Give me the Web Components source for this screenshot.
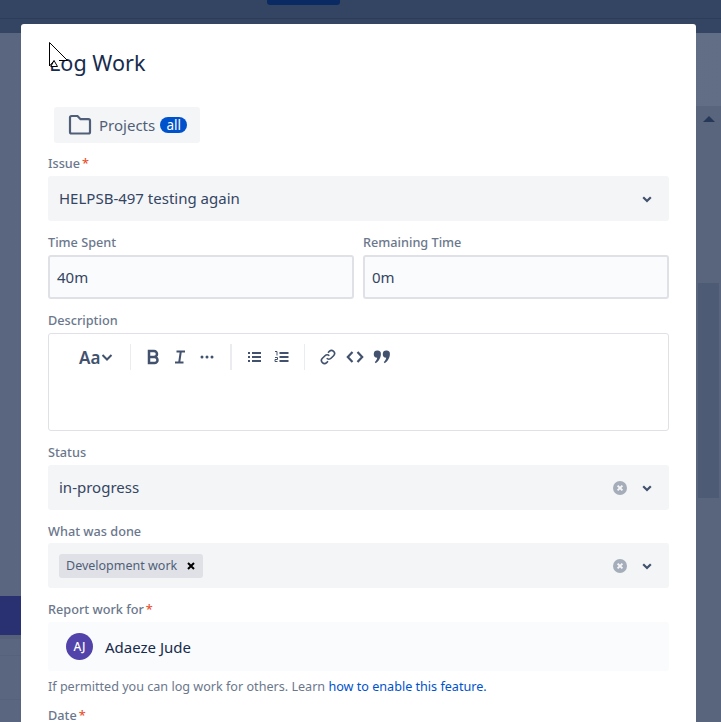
<!DOCTYPE html>
<html>
<head>
<meta charset="utf-8">
<style>
html, body { margin: 0; height: 100%; overflow: hidden; background: #5e6a82; }
body { font-family: "Noto Sans", "Liberation Sans", sans-serif; }
</style>
</head>
<body>
<app-backdrop>
  <log-work-dialog>
    <h-title slot="title">Log Work</h-title>
    <project-tab></project-tab>

    <form-field label="Issue" required>
      <select-box value="HELPSB-497 testing again"></select-box>
    </form-field>

    <field-row>
      <form-field label="Time Spent"><text-box value="40m"></text-box></form-field>
      <form-field label="Remaining Time"><text-box value="0m"></text-box></form-field>
    </field-row>

    <form-field label="Description"><rich-editor></rich-editor></form-field>

    <form-field label="Status">
      <select-box value="in-progress" clearable></select-box>
    </form-field>

    <form-field label="What was done" tight>
      <select-box clearable><tag-chip>Development work</tag-chip></select-box>
    </form-field>

    <form-field label="Report work for" required>
      <user-box initials="AJ" name="Adaeze Jude"></user-box>
    </form-field>
    <help-line>If permitted you can log work for others. Learn <a href="#">how to enable this feature.</a></help-line>

    <form-field label="Date" required></form-field>
  </log-work-dialog>
</app-backdrop>

<script>
var chevron = `<svg width="16" height="16" viewBox="0 0 16 16"><path d="M4.200 6.200 8 10l3.800-3.800" fill="none" stroke="#42526e" stroke-width="2.200"/></svg>`;

function define(name, css, html) {
    customElements.define(name, class extends HTMLElement {
        constructor() {
            super();
            this.attachShadow({mode: "open"});
        }
        connectedCallback() {
            this.shadowRoot.innerHTML = "<style>" + css + "</style>" + (typeof html == "function" ? html(this) : html);
        }
    });
}

define("app-backdrop", `
    :host { display: block; position: relative; width: 721px; height: 722px; overflow: hidden; background: linear-gradient(90deg, #5a6680, #626d86); }
    #top { height: 18px; background: #344563; border-bottom: 1px solid #2d3d58; position: relative; }
    #top i { position: absolute; left: 267px; top: 0; width: 73px; height: 5px; background: #0a2a64; border-radius: 0 0 3px 3px; }
    #sub { height: 14px; background: #344563; }
    #side { position: absolute; left: 0; top: 596px; width: 21px; height: 126px; }
    #side b { display: block; height: 39px; background: #2a3172; }
    #side u { display: block; height: 4px; background: #566179; }
    #side s { display: block; height: 16px; border-bottom: 1px solid #56617a; }
    #side em { display: block; height: 43px; border-bottom: 1px solid #56617a; }
    #track { position: absolute; left: 696px; top: 106px; width: 25px; height: 616px; background: #59647d; }
    #arrow { position: absolute; left: 703px; top: 116px; border: 6px solid transparent; border-top: 0; border-bottom: 6px solid #253858; }
    #thumb { position: absolute; left: 698px; top: 283px; width: 21px; height: 215px; background: #4d5b75; }
`, `
    <div id="top"><i></i></div><div id="sub"></div>
    <div id="side"><b></b><u></u><s></s><em></em></div>
    <div id="track"></div><div id="arrow"></div><div id="thumb"></div>
    <slot></slot>
`);

define("log-work-dialog", `
    :host { display: block; position: absolute; left: 21px; top: 24px; width: 675px; height: 760px; box-sizing: border-box;
        padding: 0 27px; background: #fff; border-radius: 3px; color: #172b4d; }
    header { font-size: 21.6px; line-height: 30px; padding: 24px 0 0 1px; height: 83px; box-sizing: border-box; color: #172b4d; }
    #cursor { position: absolute; left: 28px; top: 18px; }
`, `
    <header><slot name="title"></slot></header>
    <svg id="cursor" width="22" height="26" viewBox="0 0 22 26">
      <path d="M.5.500V24.500L5 19 4 24.500H11L9 19H18.500Z" fill="#fff"/>
      <path d="M.5.500V24L5 18.800M.5.500 18.500 18.500H10" fill="none" stroke="#000"/>
      <path d="M5 18.500 1.800 24.500H8.500Z" fill="#fff" stroke="#000"/>
    </svg>
    <slot></slot>
`);

define("h-title", `:host { display: inline; }`, `<slot></slot>`);

define("project-tab", `
    :host { display: flex; align-items: center; width: 146px; height: 36px; margin: 0 0 12px 6px; box-sizing: border-box; padding-left: 14px;
        background: #f4f5f7; border-radius: 3px; color: #505f79; font-size: 15px; }
    svg { margin-right: 7px; flex: none; }
    span { margin-right: 5px; }
    em { font-style: normal; background: #0052cc; color: #fff; font-size: 13.5px; line-height: 16px; height: 16px; width: 27px; text-align: center; border-radius: 8px; }
`, `
    <svg width="24" height="24" viewBox="0 0 24 24"><path d="M2 4.500a1.500 1.500 0 0 1 1.500-1.500h6l3 3.200h8a1.500 1.500 0 0 1 1.500 1.500v11.300a1.500 1.500 0 0 1-1.500 1.500h-17a1.500 1.500 0 0 1-1.500-1.500Z" fill="none" stroke="#505f79" stroke-width="2.200"/></svg>
    <span>Projects</span><em>all</em>
`);

define("form-field", `
    :host { display: block; flex: 1; min-width: 0; }
    label { display: block; font-size: 12.7px; line-height: 17px; font-weight: 500; color: #6b778c; margin-bottom: 5px; height: 16px; }
    :host([tight]) label { margin-bottom: 4px; }
    b { color: #e9512e; font-weight: 500; margin-left: 2px; }
`, function(el) {
    return `<label>${el.getAttribute("label")}${el.hasAttribute("required") ? "<b>*</b>" : ""}</label><slot></slot>`;
});

define("field-row", `
    :host { display: flex; gap: 9px; }
`, `<slot></slot>`);

define("select-box", `
    :host { display: flex; align-items: center; height: 45px; box-sizing: border-box; padding: 0 14px 0 11px; margin-bottom: 13px;
        background: #f4f5f7; border-radius: 3px; font-size: 15px; color: #344563; }
    #v { flex: 1; }
    #v.text { padding-bottom: 2px; }
    svg { flex: none; }
    #x { margin-right: 12px; }
`, function(el) {
    var clear = el.hasAttribute("clearable") ? `<svg id="x" width="14" height="14" viewBox="0 0 14 14"><circle cx="7" cy="7" r="7" fill="#a5adba"/><path d="M4.600 4.600l4.800 4.800M9.400 4.600 4.600 9.400" stroke="#f4f5f7" stroke-width="2"/></svg>` : "";
    var value = el.getAttribute("value");
    return `<div id="v" class="${value ? "text" : ""}">${value || ""}<slot></slot></div>${clear}${chevron}`;
});

define("text-box", `
    :host { display: flex; align-items: center; height: 44px; box-sizing: border-box; padding: 0 7px; margin-bottom: 13px;
        background: #fafbfc; border: 2px solid #dfe1e6; border-radius: 3px; font-size: 15px; color: #344563; }
`, function(el) {
    return el.getAttribute("value");
});

define("rich-editor", `
    :host { display: block; height: 98px; box-sizing: border-box; margin-bottom: 13px; background: #fff; border: 1px solid #dfe1e6; border-radius: 3px; }
    #bar { display: flex; align-items: center; height: 46px; padding-left: 30px; color: #42526e; }
    #aa { font-size: 17px; font-weight: 600; width: 36px; display: flex; align-items: center; white-space: nowrap; }
    .sep { width: 1px; height: 26px; background: #ebecf0; flex: none; }
    svg { display: block; flex: none; }
`, `
    <div id="bar">
      <div id="aa">Aa<svg width="12" height="12" viewBox="0 0 12 12" style="margin-left:1px"><path d="M1.500 4 6 8.500 10.500 4" fill="none" stroke="#42526e" stroke-width="2"/></svg></div>
      <span class="sep" style="margin:0 15px 0 15px"></span>
      <svg width="14" height="16" viewBox="0 0 14 16"><path d="M3 2h5a3 3 0 0 1 0 6H3ZM3 8h5.500a3 3 0 0 1 0 6H3Z" fill="none" stroke="#42526e" stroke-width="2.500"/></svg>
      <svg width="16" height="16" viewBox="0 0 16 16" style="margin-left:12px"><path d="M4.500 2.500h8.500M3 13.500h8.500M8.800 2.500 7.200 13.500" fill="none" stroke="#42526e" stroke-width="2"/></svg>
      <svg width="16" height="16" viewBox="0 0 16 16" style="margin-left:11px"><circle cx="3" cy="8" r="1.500" fill="#42526e"/><circle cx="8" cy="8" r="1.500" fill="#42526e"/><circle cx="13" cy="8" r="1.500" fill="#42526e"/></svg>
      <span class="sep" style="margin:0 15px 0 15px;width:2px"></span>
      <svg width="16" height="16" viewBox="0 0 16 16"><path d="M1 3h2v2H1ZM1 7h2v2H1ZM1 11h2v2H1Z" fill="#42526e"/><path d="M5 4h9M5 8h9M5 12h9" stroke="#42526e" stroke-width="2"/></svg>
      <svg width="16" height="16" viewBox="0 0 16 16" style="margin-left:11px"><path d="M1 2.500h2v4M1 8.500h2.500v2H1v2h2.500" fill="none" stroke="#42526e"/><path d="M5.500 4h9M5.500 8h9M5.500 12h9" stroke="#42526e" stroke-width="2"/></svg>
      <span class="sep" style="margin:0 15px 0 14px"></span>
      <svg width="16" height="16" viewBox="0 0 16 16"><path d="M6.700 9.300a3 3 0 0 0 4.300 0l2.600-2.600a3 3 0 0 0-4.300-4.300L8 3.700M9.300 6.700a3 3 0 0 0-4.300 0L2.400 9.300a3 3 0 0 0 4.300 4.300L8 12.300" fill="none" stroke="#42526e" stroke-width="1.600"/></svg>
      <svg width="18" height="16" viewBox="0 0 18 16" style="margin-left:10px"><path d="M6.500 3 1.800 8l4.700 5M11.500 3l4.700 5-4.700 5" fill="none" stroke="#42526e" stroke-width="2.200"/></svg>
      <svg width="18" height="16" viewBox="0 0 18 16" style="margin-left:9px"><path d="M4.500 1.500a3.400 3.400 0 0 1 3.400 3.600c0 4-2.600 7.600-5.200 9.200l-1-1.200c1.400-1.300 2.300-2.800 2.500-4.400A3.500 3.500 0 0 1 4.500 1.500ZM13.500 1.500a3.400 3.400 0 0 1 3.400 3.600c0 4-2.600 7.600-5.200 9.200l-1-1.200c1.400-1.300 2.300-2.800 2.500-4.400a3.500 3.500 0 0 1 .3-7.200Z" fill="#42526e"/></svg>
    </div>
`);

define("tag-chip", `
    :host { display: inline-flex; align-items: center; height: 24px; box-sizing: border-box; padding: 0 8px 0 7px; background: #dfe1e6; border-radius: 3px; font-size: 12.5px; color: #505f79; vertical-align: middle; }
    svg { margin-left: 10px; }
`, `<slot></slot><svg width="8" height="8" viewBox="0 0 8 8"><path d="M1 1l6 6M7 1 1 7" stroke="#000" stroke-width="2"/></svg>`);

define("user-box", `
    :host { display: flex; align-items: center; height: 49px; box-sizing: border-box; padding-left: 18px; background: #fafbfc; border-radius: 3px; font-size: 15px; color: #172b4d; margin-bottom: 8px; }
    i { font-style: normal; width: 27px; height: 27px; border-radius: 50%; background: #5243aa; color: #fff; font-size: 12px; font-weight: 500; display: flex; align-items: center; justify-content: center; margin-right: 12px; }
`, function(el) {
    return `<i>${el.getAttribute("initials")}</i>${el.getAttribute("name")}`;
});

define("help-line", `
    :host { display: block; font-size: 12.6px; line-height: 16px; color: #6b778c; margin-bottom: 12px; }
    ::slotted(a) { color: #0052cc; text-decoration: none; }
`, `<slot></slot>`);
</script>
</body>
</html>
